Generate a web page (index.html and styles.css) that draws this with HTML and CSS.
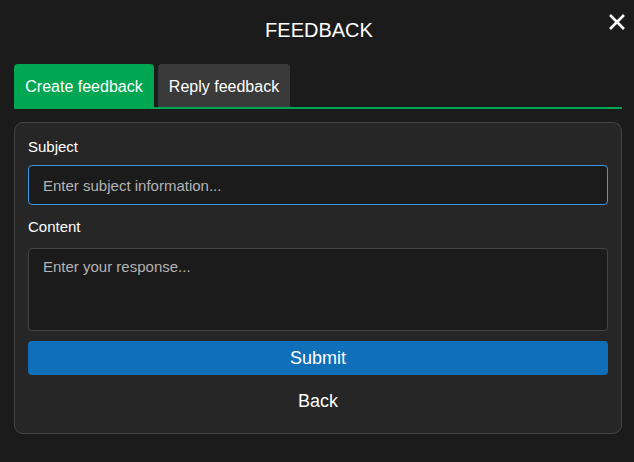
FILE: index.html
```html
<!DOCTYPE html>
<html lang="en">
<head>
<meta charset="utf-8">
<title>Feedback</title>
<link rel="stylesheet" href="styles.css">
</head>
<body>
<div class="dialog">
  <header class="header">
    <span></span>
    <h1 class="title">FEEDBACK</h1>
    <button class="close" aria-label="Close">
      <svg width="18" height="18" viewBox="0 0 18 18"><path d="M2 2 L16 16 M16 2 L2 16" stroke="#fff" stroke-width="2.6" stroke-linecap="butt" fill="none"/></svg>
    </button>
  </header>
  <nav class="tabs">
    <button class="tab tab-active">Create feedback</button>
    <button class="tab">Reply feedback</button>
  </nav>
  <form class="card">
    <label class="label label-first">Subject</label>
    <input class="input" type="text" placeholder="Enter subject information...">
    <label class="label label-second">Content</label>
    <textarea class="textarea" placeholder="Enter your response..."></textarea>
    <button type="button" class="submit">Submit</button>
    <button type="button" class="back">Back</button>
  </form>
</div>
</body>
</html>
```
FILE: styles.css
```css
* { box-sizing: border-box; }
html, body { margin: 0; padding: 0; }
body {
  background: #1b1b1b;
  font-family: "Liberation Sans", Arial, sans-serif;
  color: #fff;
  width: 634px;
  height: 462px;
  overflow: hidden;
}
.dialog {
  padding: 0 12px 0 14px;
}
.header {
  display: grid;
  grid-template-columns: 1fr auto 1fr;
  align-items: start;
  height: 64px;
}
.title {
  margin: 0;
  padding-top: 18px;
  font-size: 20px;
  line-height: 24px;
  font-weight: 400;
  padding-left: 2px;
}
.close {
  justify-self: end;
  margin-top: 13px;
  margin-right: -4px;
  padding: 0;
  width: 18px;
  height: 18px;
  background: none;
  border: 0;
  display: flex;
}
.tabs {
  display: flex;
  gap: 4px;
  height: 45px;
  border-bottom: 2px solid #00a651;
}
.tab {
  font-family: inherit;
  font-size: 16px;
  color: #fff;
  border: 0;
  border-radius: 4px 4px 0 0;
  background: #3a3a3a;
  padding: 2px 10px 0 10px;
  height: 43px;
  width: 132px;
  text-align: center;
}
.tab-active {
  background: #00a651;
  width: 140px;
  padding: 2px 11px 0 11px;
}
.card {
  margin-top: 13px;
  background: #262626;
  border: 1px solid #444;
  border-radius: 9px;
  padding: 14px 13px 15px 13px;
  display: flex;
  flex-direction: column;
}
.label {
  font-size: 15px;
  line-height: 20px;
  color: #fff;
}
.label-first { margin-bottom: 8px; }
.label-second { margin-top: 12px; margin-bottom: 11px; }
.input, .textarea {
  font-family: inherit;
  font-size: 15px;
  color: #fff;
  background: #1b1b1b;
  border-radius: 4px;
  outline: none;
  width: 100%;
}
.input {
  height: 40px;
  border: 1px solid #3a98e6;
  padding: 0 14px;
}
.textarea {
  height: 83px;
  border: 1px solid #444;
  padding: 9px 14px;
  resize: none;
  line-height: 18px;
}
.input::placeholder, .textarea::placeholder { color: #b4b4b4; opacity: 1; }
.submit {
  margin-top: 10px;
  height: 34px;
  background: #0f6fb8;
  border: 0;
  border-radius: 4px;
  color: #fff;
  font-family: inherit;
  font-size: 18px;
}
.back {
  margin-top: 9px;
  height: 34px;
  background: none;
  border: 0;
  color: #fff;
  font-family: inherit;
  font-size: 18px;
}
```
